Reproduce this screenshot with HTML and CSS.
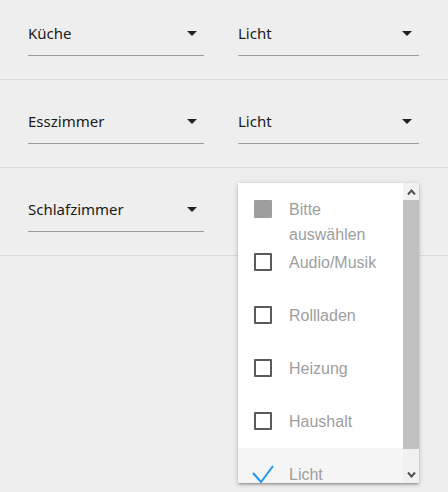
FILE: index.html
```html
<!DOCTYPE html>
<html lang="de">
<head>
    <meta charset="UTF-8">
    <meta name="viewport" content="width=device-width, initial-scale=1.0">
    <title>Räume</title>
    <link rel="stylesheet" href="styles.css">
</head>
<body>

    <div class="rooms">
        <div class="row">
            <div class="select"><span>Küche</span><i class="caret"></i></div>
            <div class="select"><span>Licht</span><i class="caret"></i></div>
        </div>

        <div class="row">
            <div class="select"><span>Esszimmer</span><i class="caret"></i></div>
            <div class="select"><span>Licht</span><i class="caret"></i></div>
        </div>

        <div class="row">
            <div class="select"><span>Schlafzimmer</span><i class="caret"></i></div>
            <div class="select open">
                <span>Licht</span><i class="caret"></i>

                <!-- open dropdown -->
                <div class="dropdown">
                    <ul class="options">
                        <li class="disabled"><span class="box"></span><span class="label">Bitte auswählen</span></li>
                        <li><span class="box"></span><span class="label">Audio/Musik</span></li>
                        <li><span class="box"></span><span class="label">Rollladen</span></li>
                        <li><span class="box"></span><span class="label">Heizung</span></li>
                        <li><span class="box"></span><span class="label">Haushalt</span></li>
                        <li class="selected">
                            <svg class="check" width="24" height="20" viewBox="0 0 24 20">
                                <polyline points="1,9 9,18 21,2" fill="none" stroke="#2196f3" stroke-width="2"/>
                            </svg>
                            <span class="label">Licht</span>
                        </li>
                    </ul>

                    <div class="scrollbar">
                        <div class="scroll-btn">
                            <svg width="9" height="6" viewBox="0 0 9 6"><path d="M1 5.5 L4.5 1.5 L8 5.5" fill="none" stroke="#505050" stroke-width="2"/></svg>
                        </div>
                        <div class="track"><div class="thumb"></div></div>
                        <div class="scroll-btn">
                            <svg width="9" height="6" viewBox="0 0 9 6"><path d="M1 0.5 L4.5 4.5 L8 0.5" fill="none" stroke="#505050" stroke-width="2"/></svg>
                        </div>
                    </div>
                </div>
            </div>
        </div>
    </div>

</body>
</html>
```

FILE: styles.css
```css
body {
    margin: 0;
    min-height: 492px;
    background-color: #eeeeee;
    font-family: "Noto Sans", "Open Sans", sans-serif;
}

.rooms {
    margin-top: -8px;
}

.row {
    display: grid;
    grid-template-columns: 176px 181px;
    column-gap: 34px;
    align-items: start;
    padding: 28px 0 0 28px;
    box-sizing: border-box;
    height: 88px;
    border-bottom: 1px solid #d9d9d9;
}

.select {
    position: relative;
    display: flex;
    justify-content: space-between;
    align-items: center;
    height: 26px;
    line-height: 26px;
    padding-bottom: 9px;
    border-bottom: 1px solid #9e9e9e;
    font-size: 15px;
    color: #1a1a1a;
}

.caret {
    width: 0;
    height: 0;
    margin-right: 7px;
    border-left: 5px solid transparent;
    border-right: 5px solid transparent;
    border-top: 5px solid #222;
}

.open .caret,
.open > span {
    visibility: hidden;
}

.dropdown {
    position: absolute;
    z-index: 2;
    top: -13px;
    left: 0;
    display: flex;
    width: 181px;
    height: 300px;
    overflow: hidden;
    background-color: #fff;
    box-shadow: 0 2px 2px 0 rgba(0, 0, 0, 0.14), 0 3px 1px -2px rgba(0, 0, 0, 0.12), 0 1px 5px 0 rgba(0, 0, 0, 0.2);
    font-family: "Liberation Sans", Arial, sans-serif;
    font-size: 16px;
    line-height: 25px;
}

.options {
    flex: 1;
    margin: 0;
    padding: 0;
    list-style: none;
    overflow: hidden;
}

.options li {
    display: flex;
    align-items: flex-start;
    height: 53px;
    padding: 14px 8px 0 16px;
    box-sizing: border-box;
    color: #9e9e9e;
}

.options .box {
    flex: none;
    width: 18px;
    height: 18px;
    margin-top: 3px;
    border: 2px solid #5a5a5a;
    border-radius: 1px;
    box-sizing: border-box;
}

.options .disabled .box {
    border-color: #9e9e9e;
    background-color: #9e9e9e;
}

.options .label {
    margin-left: 17px;
}

.options .selected {
    background-color: #f5f5f5;
}

.check {
    flex: none;
    margin: 2px 0 0 -2px;
}

.options .selected .label {
    margin-left: 13px;
}

.scrollbar {
    display: flex;
    flex-direction: column;
    width: 16px;
    background-color: #f1f1f1;
}

.scroll-btn {
    display: flex;
    justify-content: center;
    align-items: center;
    height: 17px;
}

.track {
    flex: 1;
}

.thumb {
    height: 249px;
    background-color: #c1c1c1;
}
```
